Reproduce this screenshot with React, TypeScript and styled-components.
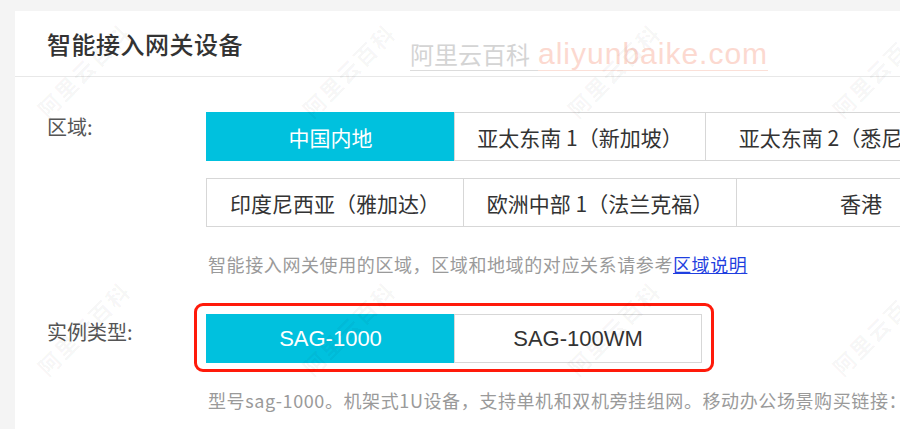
import styled, { createGlobalStyle } from "styled-components";

const GlobalStyle = createGlobalStyle`
  html, body {
    margin: 0;
    padding: 0;
    background: #f4f4f4;
    overflow: hidden;
  }
  body {
    font-family: "Liberation Sans", "Noto Sans CJK SC", sans-serif;
  }
`;

const regionRows = [
  [
    { name: "中国内地", width: 249, active: true },
    { name: "亚太东南 1（新加坡）", width: 252 },
    { name: "亚太东南 2（悉尼）", width: 252 },
  ],
  [
    { name: "印度尼西亚（雅加达）", width: 258 },
    { name: "欧洲中部 1（法兰克福）", width: 274 },
    { name: "香港", width: 250 },
  ],
];

const types = [
  { name: "SAG-1000", width: 249, active: true },
  { name: "SAG-100WM", width: 248 },
];

function App() {
  return (
    <Page>
      <GlobalStyle />
      <Card>
        <Header>
          <Title>智能接入网关设备</Title>
          <SiteMark>
            <SiteName>阿里云百科</SiteName>
            <SiteUrl>aliyunbaike.com</SiteUrl>
          </SiteMark>
        </Header>
        <Body>
          <FormRow>
            <Label offset={0}>区域:</Label>
            <Field>
              <Choices>
                {regionRows.map((row, i) => (
                  <ChoiceRow key={i}>
                    {row.map((r) => (
                      <Choice key={r.name} $w={r.width} $active={!!r.active}>
                        {r.name}
                      </Choice>
                    ))}
                  </ChoiceRow>
                ))}
              </Choices>
              <Hint>
                智能接入网关使用的区域，区域和地域的对应关系请参考
                <HintLink href="#">区域说明</HintLink>
              </Hint>
            </Field>
          </FormRow>
          <FormRow $top={38}>
            <Label offset={3}>实例类型:</Label>
            <Field>
              <Highlight>
                <ChoiceRow>
                  {types.map((t) => (
                    <Choice key={t.name} $w={t.width} $active={!!t.active} $latin>
                      {t.name}
                    </Choice>
                  ))}
                </ChoiceRow>
              </Highlight>
              <Hint>
                型号sag-1000。机架式1U设备，支持单机和双机旁挂组网。移动办公场景购买链接：
              </Hint>
            </Field>
          </FormRow>
        </Body>
      </Card>
      <Watermarks>
        {Array.from({ length: 8 }).map((_, i) => (
          <MarkCell key={i}>
            <Mark>阿里云百科</Mark>
          </MarkCell>
        ))}
      </Watermarks>
    </Page>
  );
}

const Page = styled.div`
  position: relative;
  width: 900px;
  height: 429px;
  overflow: hidden;
  padding: 11px 0 0 15px;
  box-sizing: border-box;
`;

const Card = styled.div`
  background: #fff;
  width: 1000px;
  min-height: 440px;
`;

const Header = styled.div`
  position: relative;
  height: 65px;
  display: flex;
  align-items: center;
  padding-left: 32px;
  border-bottom: 1px solid #e8e8e8;
`;

const Title = styled.h1`
  margin: 0;
  font-size: 24px;
  font-weight: 500;
  color: #333;
  letter-spacing: 0.5px;
  font-family: "Noto Sans CJK SC", sans-serif;
`;

const SiteMark = styled.div`
  position: absolute;
  left: 395px;
  top: 27px;
  display: flex;
  align-items: baseline;
  white-space: nowrap;
`;

const SiteName = styled.span`
  font-family: "Noto Sans CJK SC", sans-serif;
  font-size: 24px;
  line-height: 32px;
  color: #d4d4d4;
  border-bottom: 1px solid #dcdcdc;
  padding-right: 8px;
`;

const SiteUrl = styled.span`
  font-family: "Liberation Sans", sans-serif;
  font-size: 30px;
  letter-spacing: 1px;
  line-height: 32px;
  color: #fcd9d0;
  border-bottom: 1px solid #fbe0d8;
`;

const Body = styled.div`
  padding: 35px 0 0 32px;
`;

const FormRow = styled.div<{ $top?: number }>`
  display: flex;
  margin-top: ${(p) => p.$top ?? 0}px;
`;

const Label = styled.div<{ offset: number }>`
  width: 159px;
  flex-shrink: 0;
  padding-top: ${(p) => p.offset}px;
  font-family: "Noto Sans CJK SC", sans-serif;
  font-size: 20px;
  line-height: 30px;
  color: #555;
`;

const Field = styled.div`
  display: flex;
  flex-direction: column;
  align-items: flex-start;
`;

const Choices = styled.div`
  display: flex;
  flex-direction: column;
  gap: 17px;
`;

const ChoiceRow = styled.div`
  display: flex;
`;

const Choice = styled.div<{ $w: number; $active: boolean; $latin?: boolean }>`
  width: ${(p) => p.$w}px;
  height: 49px;
  box-sizing: border-box;
  flex-shrink: 0;
  display: flex;
  align-items: center;
  justify-content: center;
  white-space: nowrap;
  border: 1px solid ${(p) => (p.$active ? "#00c1de" : "#d7d7d7")};
  background: ${(p) => (p.$active ? "#00c1de" : "#fff")};
  color: ${(p) => (p.$active ? "#fff" : "#333")};
  font-family: ${(p) =>
    p.$latin ? `"Liberation Sans", sans-serif` : `"Noto Sans CJK SC", sans-serif`};
  font-size: ${(p) => (p.$latin ? 22 : 21)}px;
  & + & {
    margin-left: -1px;
  }
`;

const Highlight = styled.div`
  position: relative;
  &::before {
    content: "";
    position: absolute;
    top: -11px;
    left: -12px;
    right: -12px;
    bottom: -9px;
    border: 3px solid #ff1a0a;
    border-radius: 9px;
    pointer-events: none;
  }
`;

const Hint = styled.div`
  margin-top: 25px;
  font-family: "Noto Sans CJK SC", sans-serif;
  font-size: 18px;
  line-height: 24px;
  letter-spacing: 0.6px;
  color: #9a9a9a;
  white-space: nowrap;
  margin-left: 2px;
`;

const HintLink = styled.a`
  color: #1f3fe0;
  text-decoration: underline;
`;

const Watermarks = styled.div`
  position: absolute;
  left: -49px;
  top: -59px;
  display: grid;
  grid-template-columns: repeat(4, 265px);
  grid-auto-rows: 258px;
  pointer-events: none;
`;

const MarkCell = styled.div`
  display: flex;
  align-items: center;
  justify-content: center;
`;

const Mark = styled.span`
  transform: rotate(-45deg);
  font-family: "Noto Sans CJK SC", sans-serif;
  font-size: 22px;
  font-weight: 700;
  letter-spacing: 2px;
  color: rgba(0, 0, 0, 0.045);
  white-space: nowrap;
`;

export default App;
